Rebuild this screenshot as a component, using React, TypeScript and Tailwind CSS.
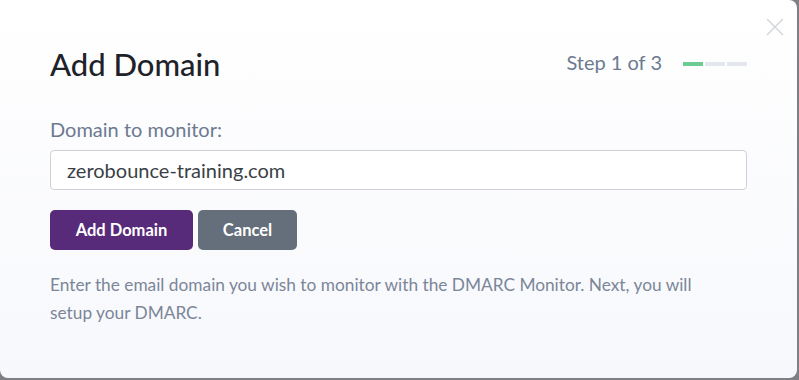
import { X } from "lucide-react";

const STEPS = [true, false, false];

export default function App() {
  return (
    <div className="w-[799px] h-[380px] bg-[#7d7f84] font-['Lato',sans-serif]">
      <div className="relative w-[797px] h-[378px] rounded-b-lg rounded-tr-lg bg-gradient-to-b from-white to-[#f7f8fc] px-[50px] pt-[44px]">
        <button type="button" className="absolute right-[7px] top-[12px] text-[#d3d6da]">
          <X size={30} strokeWidth={1.2} />
        </button>

        <header className="flex items-start justify-between">
          <h1 className="text-[31px] leading-[40px] font-medium text-[#1e232a]">Add Domain</h1>
          <div className="mt-[6px] flex h-[24px] items-center gap-[21px]">
            <span className="text-[20px] leading-[24px] text-[#6c7a90]">Step 1 of 3</span>
            <div className="mt-[3px] flex gap-[2px]">
              {STEPS.map((done, i) => (
                <span
                  key={i}
                  className={done ? "h-[4px] w-[20px] bg-[#6bcb91]" : "h-[4px] w-[20px] bg-[#e4e7ee]"}
                />
              ))}
            </div>
          </div>
        </header>

        <label className="mt-[33px] block text-[20px] leading-[24px] text-[#6c7a90]">Domain to monitor:</label>
        <input
          type="text"
          defaultValue="zerobounce-training.com"
          className="mt-[9px] block h-[40px] w-full rounded-[4px] border border-[#cfd1d4] bg-white px-[16px] text-[20px] text-[#3a3f46] outline-none"
        />

        <div className="mt-[20px] flex gap-[5px]">
          <button type="button" className="h-[40px] w-[143px] rounded-[5px] bg-[#582a7a] text-[16.5px] font-bold text-white">
            Add Domain
          </button>
          <button type="button" className="h-[40px] w-[99px] rounded-[5px] bg-[#656f7b] text-[16.5px] font-bold text-white">
            Cancel
          </button>
        </div>

        <p className="mt-[21px] text-[17.3px] leading-[28px] text-[#7b8699]">
          Enter the email domain you wish to monitor with the DMARC Monitor. Next, you will
          <br />
          setup your DMARC.
        </p>
      </div>
    </div>
  );
}
